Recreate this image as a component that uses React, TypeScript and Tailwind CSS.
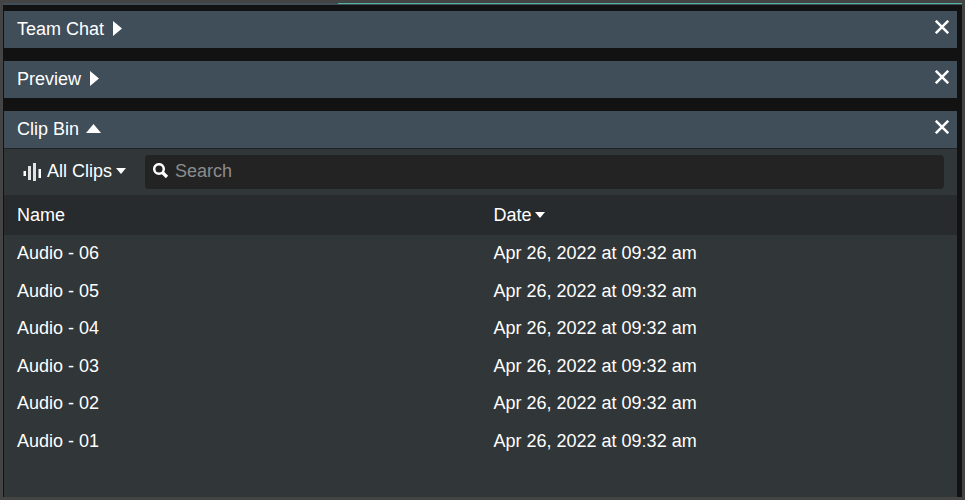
import React from "react";

const clips = ["Audio - 06", "Audio - 05", "Audio - 04", "Audio - 03", "Audio - 02", "Audio - 01"];

function CloseButton({ label }: { label: string }) {
  return (
    <button type="button" aria-label={label} className="p-2 pt-1">
      <svg viewBox="0 0 14 14" className="w-[14px] h-[14px]" fill="none" stroke="currentColor" strokeWidth="2.5">
        <path d="M0.8 0.8L13.2 13.2M13.2 0.8L0.8 13.2" />
      </svg>
    </button>
  );
}

function Caret({ className }: { className: string }) {
  return (
    <svg viewBox="0 0 10 6" className={className} fill="currentColor">
      <path d="M0 0H10L5 6Z" />
    </svg>
  );
}

function PanelHeader({ title, open = false }: { title: string; open?: boolean }) {
  return (
    <header className="flex h-[37px] shrink-0 items-center justify-between bg-[#404e5a] pb-[2px] pl-[13px]">
      <button type="button" aria-expanded={open} className="flex items-center">
        <span>{title}</span>
        {open ? (
          <svg viewBox="0 0 15 9" className="ml-[7px] w-[15px] h-[9px]" fill="currentColor">
            <path d="M0 9L7.5 0L15 9Z" />
          </svg>
        ) : (
          <svg viewBox="0 0 9 15" className="ml-[9px] w-[9px] h-[15px]" fill="currentColor">
            <path d="M0 0L9 7.5L0 15Z" />
          </svg>
        )}
      </button>
      <CloseButton label={`Close ${title}`} />
    </header>
  );
}

export default function App() {
  return (
    <div className="h-screen bg-[#444444] p-[3px] font-['Liberation_Sans',Arial,sans-serif] text-[18px] leading-5 text-white">
      <div className="flex h-full flex-col bg-[#121212]">
        <div className="flex h-[2px] shrink-0 flex-col bg-[#404e5a]">
          <div className="ml-[335px] h-px bg-[#4fb3a0]" />
        </div>
        <main className="flex flex-1 flex-col gap-[13px] pt-[6px] pr-[5px] pl-px">
          <section>
            <PanelHeader title="Team Chat" />
          </section>
          <section>
            <PanelHeader title="Preview" />
          </section>
          <section className="flex flex-1 flex-col bg-[#313638]">
            <PanelHeader title="Clip Bin" open />
            <div className="flex h-[47px] shrink-0 items-center border-t border-[#202224] pr-[13px] pl-[19px]">
              <button type="button" className="flex items-center pb-[2px]">
                <svg viewBox="0 0 18 20" className="mr-[6px] w-[18px] h-5" fill="currentColor">
                  <path d="M0.5 10H3V15H0.5ZM15.5 8H18V17H15.5Z" />
                  <path d="M5 5H8V19H5ZM10 2H13V20H10Z" opacity="0.85" />
                </svg>
                <span>All Clips</span>
                <Caret className="ml-1 w-[10px] h-[6px]" />
              </button>
              <label className="ml-[19px] flex h-[34px] flex-1 items-center rounded-[4px] bg-[#232323] pb-[2px] pl-2">
                <svg viewBox="0 0 16 16" className="w-4 h-4" fill="none" stroke="currentColor">
                  <circle cx="6" cy="6" r="4.8" strokeWidth="2.5" />
                  <path d="M9.5 9.5L14 14" strokeWidth="3.2" />
                </svg>
                <input
                  type="text"
                  aria-label="Search"
                  placeholder="Search"
                  className="ml-[6px] min-w-0 flex-1 bg-transparent outline-none placeholder:text-[#8c8c8c]"
                />
              </label>
            </div>
            <table className="w-full table-fixed text-left">
              <thead className="bg-[#272b2d]">
                <tr className="h-10">
                  <th className="w-1/2 pl-[13px] font-normal">Name</th>
                  <th className="pl-[13px] font-normal">
                    <button type="button" className="flex items-center">
                      Date
                      <Caret className="ml-[3px] w-[10px] h-[6px]" />
                    </button>
                  </th>
                </tr>
              </thead>
              <tbody>
                {clips.map((name) => (
                  <tr key={name} className="h-[38px] even:h-[37px]">
                    <td className="pb-[2px] pl-[13px]">{name}</td>
                    <td className="pb-[2px] pl-[13px]">Apr 26, 2022 at 09:32 am</td>
                  </tr>
                ))}
              </tbody>
            </table>
          </section>
        </main>
      </div>
    </div>
  );
}
